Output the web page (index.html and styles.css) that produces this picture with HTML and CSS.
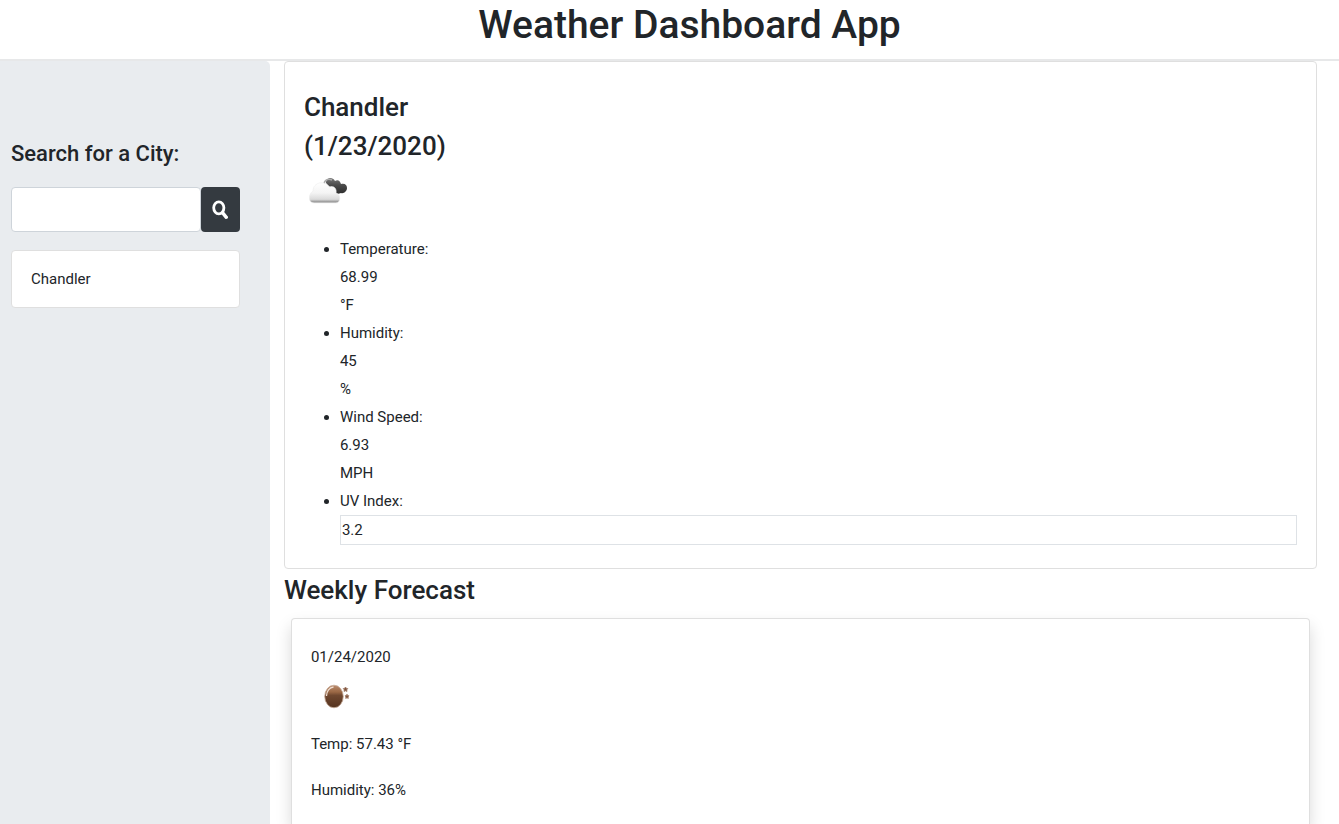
FILE: index.html
```html
<!DOCTYPE html>
<html lang="en">
<head>
<meta charset="utf-8">
<meta name="viewport" content="width=device-width, initial-scale=1">
<title>Weather Dashboard App</title>
<link rel="stylesheet" href="styles.css">
</head>
<body>
<header class="header"><h1 class="header-title">Weather Dashboard App</h1></header>
<div class="layout">
  <aside class="sidebar">
    <label class="search-label" for="city">Search for a City:</label>
    <form class="search">
      <input class="search-input" id="city" type="text">
      <button class="search-button" type="button" aria-label="Search">
        <svg class="search-icon" viewBox="0 0 16 20"><ellipse cx="6.8" cy="7.8" rx="5.1" ry="6" fill="none" stroke="#fff" stroke-width="2.8"/><path d="M10.500 12.700l3.800 4.600" stroke="#fff" stroke-width="3.400" stroke-linecap="round"/></svg>
      </button>
    </form>
    <div class="history">Chandler</div>
  </aside>
  <main class="main">
    <section class="card current">
      <h2 class="city">Chandler<br>(1/23/2020)</h2>
      <svg class="weather-icon" viewBox="0 0 50 47" aria-hidden="true">
        <defs>
          <linearGradient id="cloud" x1="0" y1="0" x2="0" y2="1"><stop offset="0" stop-color="#fff"/><stop offset=".5" stop-color="#f4f4f4"/><stop offset=".82" stop-color="#dadada"/><stop offset=".94" stop-color="#999"/><stop offset="1" stop-color="#bbb"/></linearGradient>
          <linearGradient id="dark" x1="0" y1="0" x2="0" y2="1"><stop offset="0" stop-color="#777"/><stop offset=".45" stop-color="#4b4b4b"/><stop offset="1" stop-color="#2d2d2d"/></linearGradient>
        </defs>
        <path d="M22 17c0-5 6-7 9-2 3-2 5 0 6 3 4-1 6 1 6 4s-3 6-6 5c-4 2-7 0-8-3z" fill="url(#dark)"/>
        <path d="M20 19c0-5 4-7 8-5" fill="none" stroke="#aaa" stroke-width="1.6"/>
        <path d="M10 37c-6 0-6-9-1-12 0-9 12-11 16-4 5-2 8 2 7 6 5 1 5 10 0 10z" fill="url(#cloud)" stroke="#ececec" stroke-width=".6"/>
      </svg>
      <ul class="metrics">
        <li>Temperature:<div>68.99</div><div>°F</div></li>
        <li>Humidity:<div>45</div><div>%</div></li>
        <li>Wind Speed:<div>6.93</div><div>MPH</div></li>
        <li>UV Index:<div class="uv">3.2</div></li>
      </ul>
    </section>
    <h2 class="forecast-title">Weekly Forecast</h2>
    <section class="card forecast">
      <p class="date">01/24/2020</p>
      <svg class="forecast-icon" viewBox="0 0 50 52" aria-hidden="true">
        <defs><linearGradient id="moon" x1="0" y1="0" x2="0" y2="1"><stop offset="0" stop-color="#ba8b6d"/><stop offset=".3" stop-color="#9b6845"/><stop offset=".45" stop-color="#704830"/><stop offset="1" stop-color="#54331f"/></linearGradient></defs>
        <ellipse cx="23" cy="25.500" rx="9.300" ry="11.300" fill="url(#moon)" stroke="#c9ae9d" stroke-width=".8"/>
        <path d="M15.500 25c0-5 3-8.500 7-9" fill="none" stroke="#f0dfd3" stroke-width="1.300"/>
        <path d="M34.500 16l.8 1.300 1.500.3-1 1.200.2 1.700-1.500-.7-1.500.7.2-1.700-1-1.200 1.500-.3zM36 23.200l.7 1.300 1.300.3-.9 1.100.2 1.500-1.300-.6-1.300.6.2-1.500-.9-1.100 1.300-.3z" fill="#80543c" stroke="#a07b68" stroke-width=".8"/>
      </svg>
      <p class="reading">Temp: 57.43 °F</p>
      <p class="reading">Humidity: 36%</p>
    </section>
  </main>
</div>
</body>
</html>
```
FILE: styles.css
```css
* { box-sizing: border-box; }
body {
  display: flex;
  flex-direction: column;
  min-height: 100vh;
  margin: 0;
  font-family: Roboto, "Open Sans", sans-serif;
  font-size: 15px;
  line-height: 28px;
  color: #212529;
  background: #fff;
}
h1, h2, p { margin: 0; }
.header {
  padding: 0 0 9px 40px;
  border-bottom: 2px solid #e7e8e9;
  text-align: center;
}
.header-title { font-size: 39px; font-weight: 500; line-height: 50px; }
.layout { flex: 1; display: flex; }
.sidebar {
  flex: 0 0 20.16%;
  min-width: 0;
  padding: 76px 30px 24px 11px;
  background: #e9ecef;
  border-radius: 0 5px 0 0;
}
.search-label { display: block; margin-bottom: 17px; font-size: 22px; font-weight: 500; line-height: 33px; }
.search { display: flex; height: 45px; margin-bottom: 18px; }
.search-input {
  flex: 1;
  min-width: 0;
  padding: 6px 12px;
  font: inherit;
  color: inherit;
  background: #fff;
  border: 1px solid #ced4da;
  border-radius: 4px;
}
.search-button {
  display: flex;
  align-items: center;
  justify-content: center;
  width: 39px;
  padding: 0;
  background: #343a40;
  border: 0;
  border-radius: 4px;
}
.search-icon { width: 16px; height: 20px; }
.history { padding: 14px 19px; background: #fff; border: 1px solid #dfdfdf; border-radius: 4px; }
.main { flex: 1; min-width: 0; display: flex; flex-direction: column; padding: 0 22px 0 14px; }
.card { background: #fff; border: 1px solid #dfdfdf; border-radius: 4px; }
.current { padding: 26px 19px 23px; }
.city, .forecast-title { font-size: 26px; font-weight: 500; line-height: 39px; }
.weather-icon { display: block; width: 50px; height: 47px; margin-bottom: 22px; }
.metrics { margin: 0; padding: 0 0 0 36px; }
.uv { padding: 0 1px; border: 1px solid #dee2e6; }
.forecast-title { margin: 2px 0 8px; }
.forecast {
  flex: 1;
  margin: 0 7px;
  padding: 24px 19px 19px;
  border-bottom: 0;
  border-radius: 4px 4px 0 0;
  box-shadow: 0 8px 16px rgba(0, 0, 0, .15);
}
.forecast-icon { display: block; width: 50px; height: 52px; margin-bottom: 7px; }
.reading + .reading { margin-top: 18px; }
```
